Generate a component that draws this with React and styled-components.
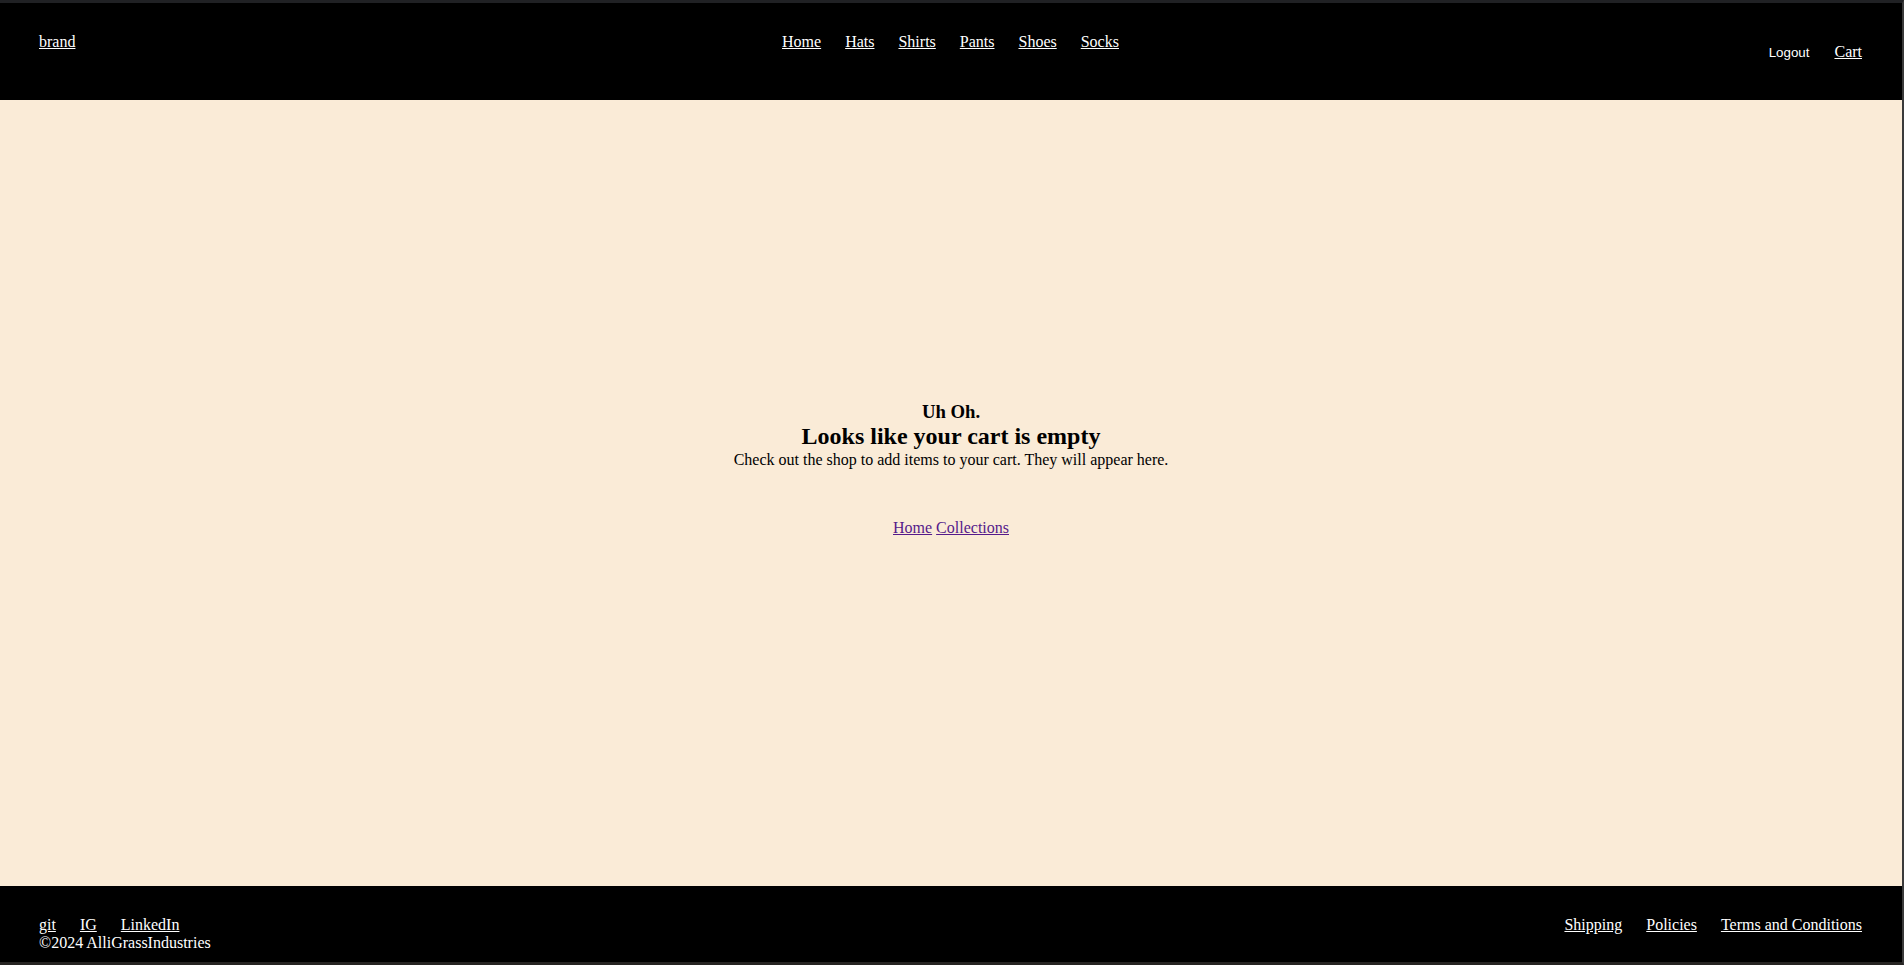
import React from "react";
import styled, { createGlobalStyle } from "styled-components";

const GlobalStyle = createGlobalStyle`
  html, body {
    margin: 0;
    padding: 0;
    height: 100%;
  }
  body {
    font-family: "Liberation Serif", "Times New Roman", serif;
    font-size: 16px;
    background: #000;
  }
  #root {
    height: 100%;
  }
`;

const nav = ["Home", "Hats", "Shirts", "Pants", "Shoes", "Socks"];
const socials = ["git", "IG", "LinkedIn"];
const legal = ["Shipping", "Policies", "Terms and Conditions"];

function App() {
  return (
    <>
      <GlobalStyle />
      <Frame>
        <Header>
          <Brand href="#">brand</Brand>
          <NavList>
            {nav.map((item) => (
              <LightLink key={item} href="#">
                {item}
              </LightLink>
            ))}
          </NavList>
          <Account>
            <LogoutButton type="button">Logout</LogoutButton>
            <LightLink href="#">Cart</LightLink>
          </Account>
        </Header>

        <Main>
          <SubTitle>Uh Oh.</SubTitle>
          <Title>Looks like your cart is empty</Title>
          <Note>Check out the shop to add items to your cart. They will appear here.</Note>
          <Back>
            <VisitedLink href="#">Home</VisitedLink>{" "}
            <VisitedLink href="#">Collections</VisitedLink>
          </Back>
        </Main>

        <Footer>
          <div>
            <LinkRow>
              {socials.map((item) => (
                <LightLink key={item} href="#">
                  {item}
                </LightLink>
              ))}
            </LinkRow>
            <Copy>©2024 AlliGrassIndustries</Copy>
          </div>
          <LinkRow>
            {legal.map((item) => (
              <LightLink key={item} href="#">
                {item}
              </LightLink>
            ))}
          </LinkRow>
        </Footer>
      </Frame>
    </>
  );
}
export default App;

const Frame = styled.div`
  box-sizing: border-box;
  height: 100vh;
  display: flex;
  flex-direction: column;
  border-top: 3px solid #202124;
  border-right: 2px solid #3a3a3a;
  border-bottom: 3px solid #262422;
  background: #000;
`;

const Header = styled.header`
  height: 97px;
  box-sizing: border-box;
  padding: 30px 40px 0 39px;
  display: grid;
  grid-template-columns: 1fr auto 1fr;
  align-items: start;
  background: #000;
`;

const LightLink = styled.a`
  color: #fff;
  text-decoration: underline;
  font-size: 16px;
`;

const Brand = styled(LightLink)`
  justify-self: start;
`;

const NavList = styled.nav`
  display: flex;
  gap: 24px;
`;

const Account = styled.div`
  justify-self: end;
  display: flex;
  align-items: baseline;
  gap: 25px;
  padding-top: 10px;
`;

const LogoutButton = styled.button`
  background: none;
  border: none;
  padding: 0;
  color: #fff;
  font-family: "Liberation Sans", Arial, sans-serif;
  font-size: 13.33px;
  cursor: pointer;
`;

const Main = styled.main`
  flex: 1;
  display: flex;
  flex-direction: column;
  align-items: center;
  padding-top: 301px;
  background: #faebd7;
  color: #000;
  text-align: center;
`;

const SubTitle = styled.h3`
  margin: 0;
  font-size: 18.72px;
  font-weight: bold;
`;

const Title = styled.h2`
  margin: 0;
  font-size: 24px;
  font-weight: bold;
`;

const Note = styled.p`
  margin: 1px 0 0;
  font-size: 16px;
`;

const Back = styled.div`
  margin-top: 50px;
`;

const VisitedLink = styled.a`
  color: #551a8b;
  text-decoration: underline;
`;

const Footer = styled.footer`
  height: 76px;
  box-sizing: border-box;
  padding: 30px 40px 0 39px;
  display: flex;
  justify-content: space-between;
  align-items: flex-start;
  background: #000;
  color: #fff;
`;

const LinkRow = styled.div`
  display: flex;
  gap: 24px;
`;

const Copy = styled.div`
  font-size: 16px;
`;
